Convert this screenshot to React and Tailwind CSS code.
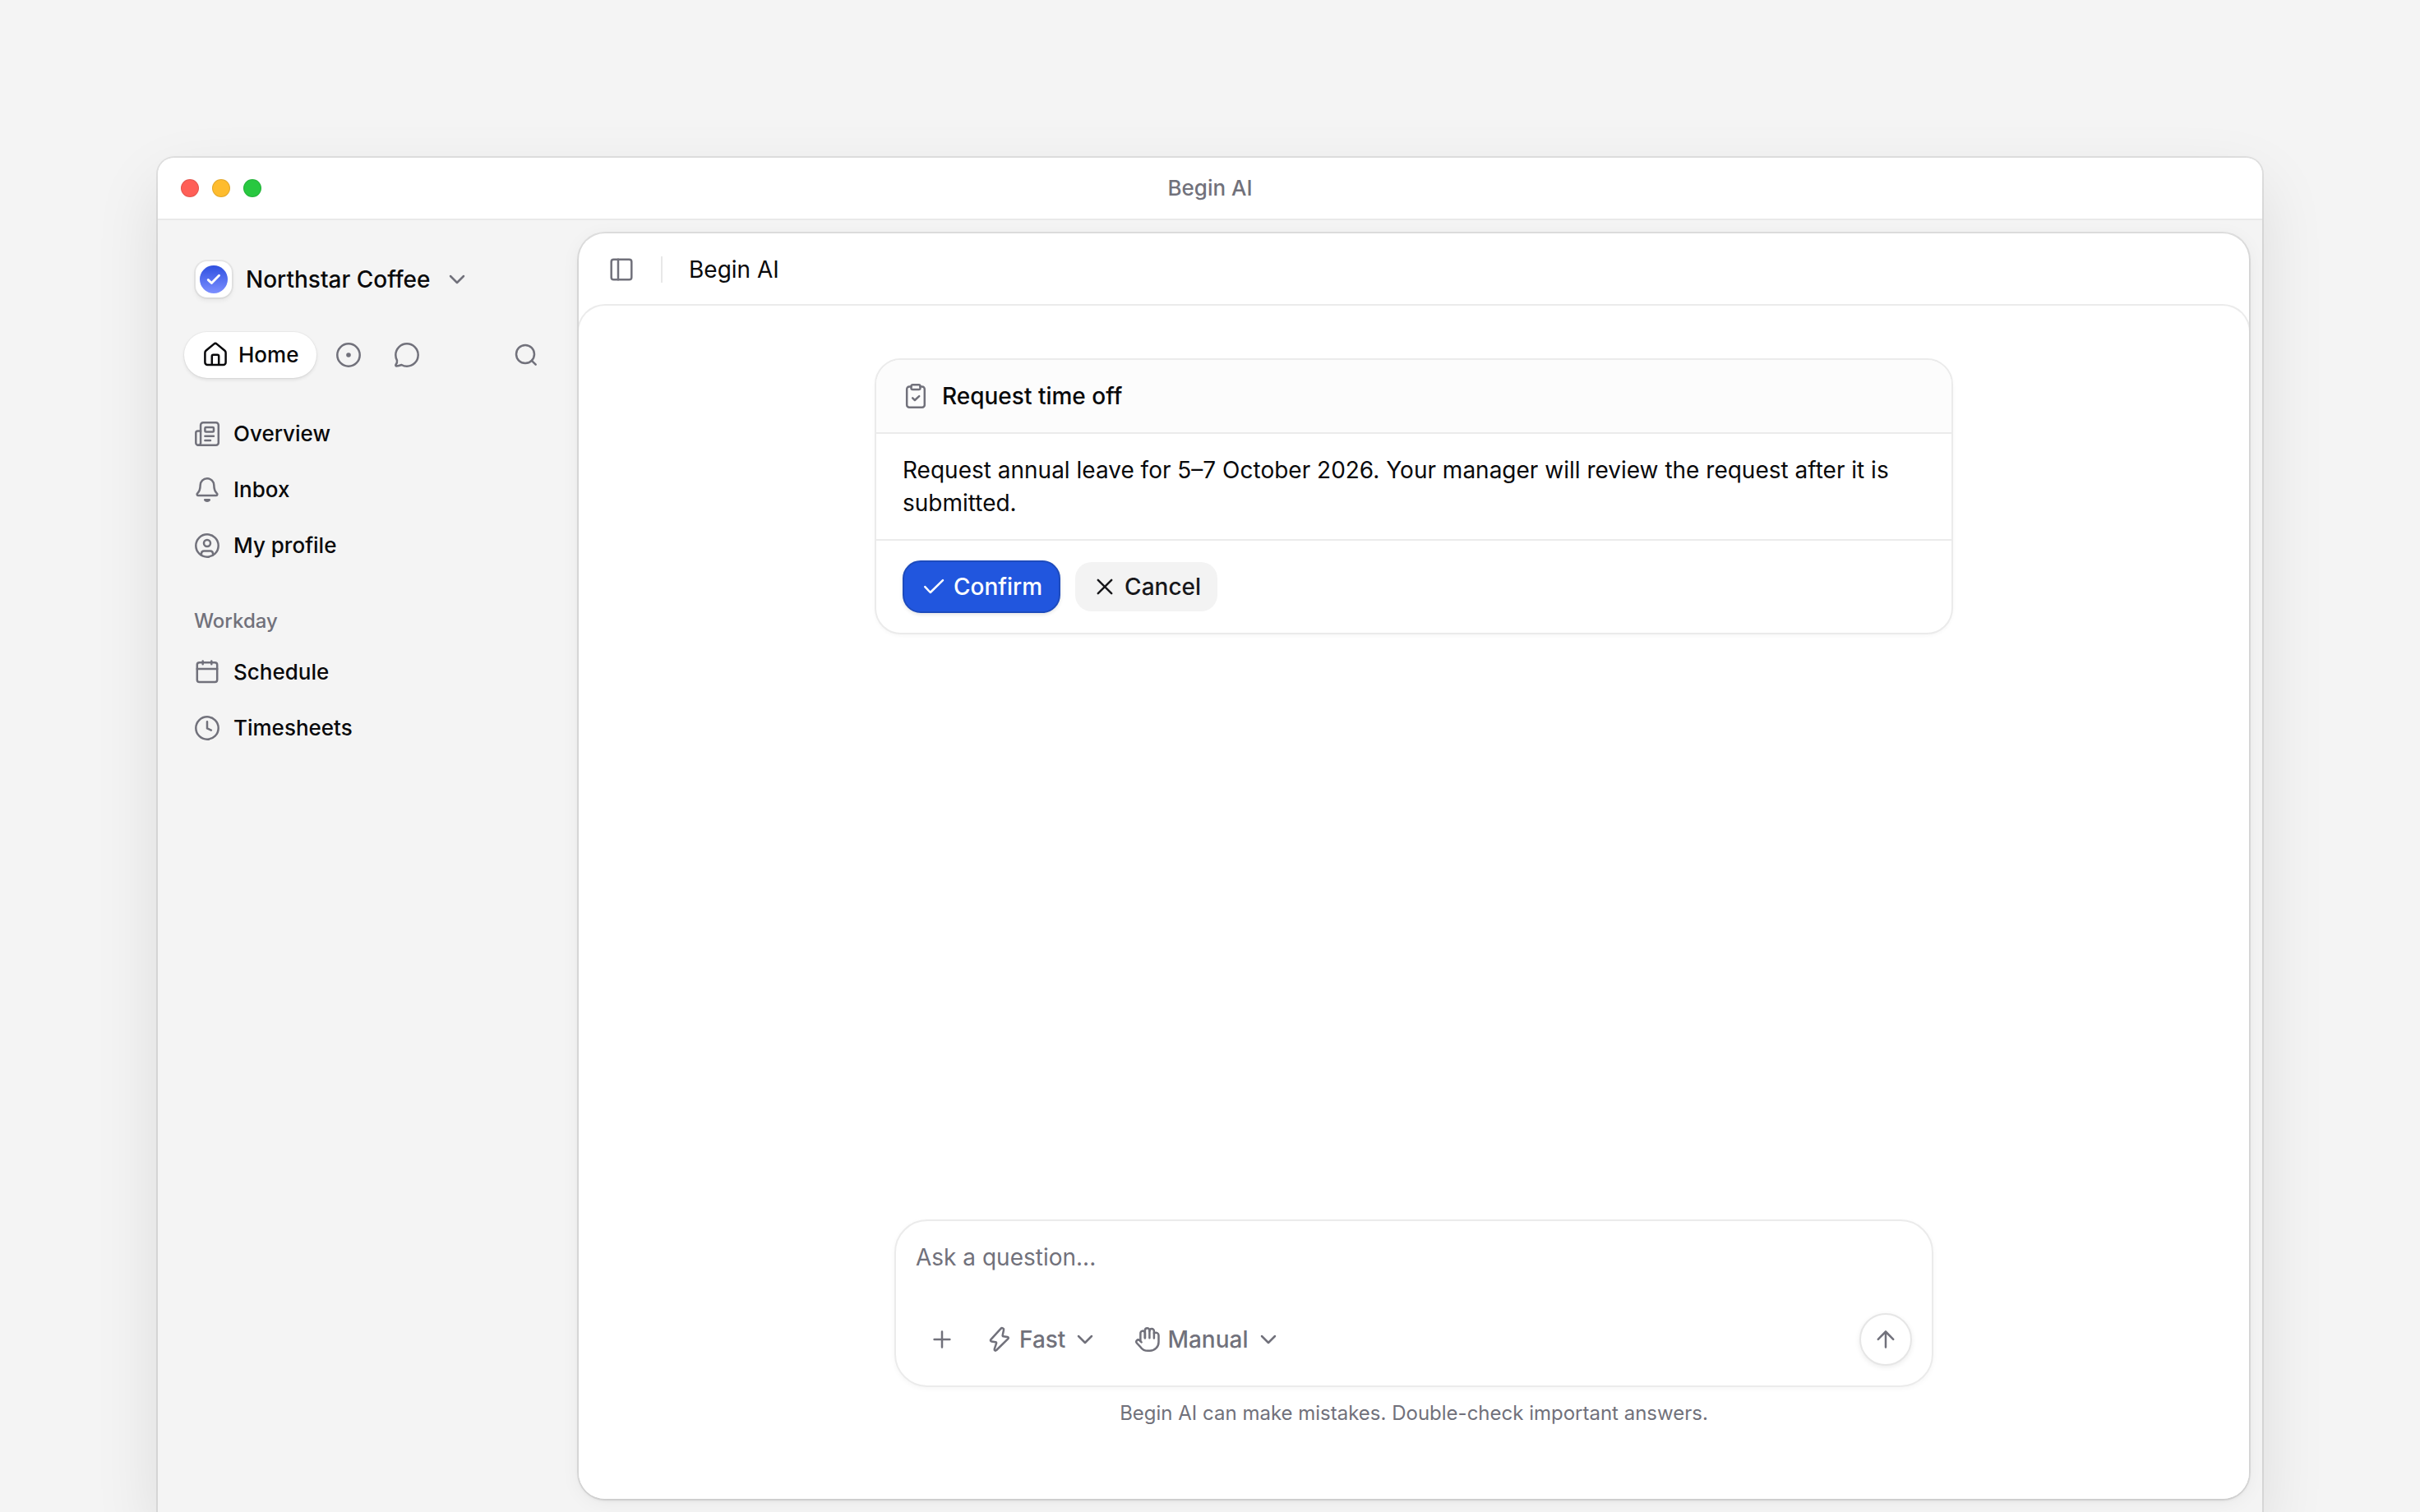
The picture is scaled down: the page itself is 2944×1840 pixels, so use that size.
import React from "react";

function Icon({ children, className = "" }) {
  return (
    <svg
      viewBox="0 0 32 32"
      className={`size-8 shrink-0 ${className}`}
      fill="none"
      stroke="currentColor"
      strokeWidth="2.5"
      strokeLinecap="round"
      strokeLinejoin="round"
      aria-hidden="true"
    >
      {children}
    </svg>
  );
}

const HomeIcon = () => (
  <Icon>
    <path d="M3.4 24.9V13.2c0-.9.4-1.8 1.1-2.4L14.3 2.6a2.6 2.6 0 0 1 3.4 0l9.8 8.2c.7.6 1.1 1.5 1.1 2.4v11.7a3 3 0 0 1-3 3H6.4a3 3 0 0 1-3-3z" />
    <path d="M11.8 27.7V17.6c0-1 .8-1.8 1.8-1.8h4.8c1 0 1.8.8 1.8 1.8v10.1" />
  </Icon>
);
const TargetIcon = () => (
  <Icon>
    <circle cx="16" cy="16" r="13.7" />
    <circle cx="16" cy="16" r="2.8" fill="currentColor" stroke="none" />
  </Icon>
);
const ChatIcon = () => (
  <Icon>
    <path d="M16 2.3C8.4 2.3 2.3 8.4 2.3 16c0 2.4.6 4.6 1.7 6.6.3 1.7-.3 3.6-1.5 5.2-.5.7 0 1.6.8 1.6 2.1-.1 4.1-.6 6.2-1.4 1.9 1.1 4.2 1.7 6.5 1.7 7.6 0 13.7-6.1 13.7-13.7S23.6 2.3 16 2.3z" />
  </Icon>
);
const SearchIcon = () => (
  <Icon>
    <circle cx="15" cy="15" r="11" />
    <path d="M22.8 22.8l4.9 4.9" />
  </Icon>
);
const NewsIcon = () => (
  <Icon>
    <path d="M5.2 29.8a2.9 2.9 0 0 1-2.9-2.9V14.7a2.3 2.3 0 0 1 2.3-2.3h3.5" />
    <path d="M5.2 29.8a2.9 2.9 0 0 0 2.9-2.9V5.2a3 3 0 0 1 3-3h15.7a3 3 0 0 1 3 3v21.6a3 3 0 0 1-3 3z" />
    <rect x="13.4" y="8.1" width="10.6" height="5.5" rx="1.2" />
    <path d="M13.4 18.7H24M13.4 24H20" />
  </Icon>
);
const BellIcon = () => (
  <Icon>
    <path d="M16 2.2c-4.7 0-8.2 3.6-8.3 8.2-.1 4.3-.7 7.3-3.3 9.7-1.3 1.2-.7 3 1 3h21.2c1.7 0 2.3-1.8 1-3-2.6-2.4-3.2-5.4-3.3-9.7-.1-4.6-3.6-8.200-8.300-8.200z" />
    <path d="M13.2 28.3a3.3 3.3 0 0 0 5.6 0z" fill="currentColor" />
  </Icon>
);
const ProfileIcon = () => (
  <Icon>
    <circle cx="16" cy="16" r="13.7" />
    <circle cx="16" cy="13" r="4" />
    <path d="M8.8 27.2l.3-2.2a3 3 0 0 1 3-2.6h7.8a3 3 0 0 1 3 2.6l.3 2.2" />
  </Icon>
);
const CalendarIcon = () => (
  <Icon>
    <rect x="3.8" y="4.2" width="24.4" height="23.8" rx="2.8" />
    <path d="M3.8 12h24.4M10.700 2.400v3.800M21.300 2.400v3.800" />
  </Icon>
);
const ClockIcon = () => (
  <Icon>
    <circle cx="16" cy="16" r="13.7" />
    <path d="M16 8.200v8.200l4.900 2.200" />
  </Icon>
);
const SidebarIcon = () => (
  <Icon>
    <rect x="3.7" y="3.7" width="24.6" height="24.6" rx="2.8" />
    <path d="M12 3.7v24.6" />
  </Icon>
);
const ClipboardIcon = () => (
  <Icon>
    <path d="M10.5 4.5H8.2a3 3 0 0 0-3 3v19.3a3 3 0 0 0 3 3h15.600a3 3 0 0 0 3-3V7.500a3 3 0 0 0-3-3h-2.300" />
    <rect x="10.500" y="2.200" width="11" height="5.800" rx="1.800" />
    <path d="M12.200 18.400l2.700 2.600 5.300-4.900" />
  </Icon>
);
const CheckIcon = () => (
  <Icon>
    <path d="M5.300 16.200l6.500 6.800L27 8.200" />
  </Icon>
);
const CloseIcon = () => (
  <Icon>
    <path d="M7.800 7.800l16.400 16.400M24.200 7.800L7.800 24.200" />
  </Icon>
);
const ChevronIcon = () => (
  <Icon>
    <path d="M8 12l8 8 8-8" />
  </Icon>
);
const PlusIcon = () => (
  <Icon>
    <path d="M16 6.600v18.800M6.600 16h18.800" />
  </Icon>
);
const ArrowUpIcon = () => (
  <Icon>
    <path d="M16 25.500V6.500M6.800 15.800L16 6.500l9.200 9.300" />
  </Icon>
);
const BoltIcon = () => (
  <Icon>
    <path d="M17.500 2.900L5.400 16.200c-.8.900-.4 2 .8 2.200l5 .8c.7.100 1.100.7.900 1.400l-2.300 7c-.5 1.700 1.200 2.700 2.400 1.400l14.200-13.800c.8-.9.400-2-.8-2.200l-5-.8c-.7-.1-1.100-.7-.9-1.400l1.400-6.500c.4-1.900-2.300-2.900-3.600-1.400z" />
  </Icon>
);
const HandIcon = () => (
  <Icon>
    <path d="M7.400 17.600V8.800a2.700 2.700 0 0 1 5.500-.8v6.200" />
    <path d="M12.900 14.200V5a2.750 2.750 0 0 1 5.500 0v9.200" />
    <path d="M18.400 5.800a2.750 2.750 0 0 1 5.500 0v8.600" />
    <path d="M23.900 8.200c3.400-1 5.600.2 5.600 2.800v8.200a10.600 10.600 0 0 1-10.600 10.600h-2.500a11 11 0 0 1-8.800-4.400L3 20.500c-2-2.300 1-5.500 3.300-3.400l2.300 2.300" />
  </Icon>
);

const mainLinks = [
  { label: "Overview", icon: NewsIcon },
  { label: "Inbox", icon: BellIcon },
  { label: "My profile", icon: ProfileIcon },
];
const workdayLinks = [
  { label: "Schedule", icon: CalendarIcon },
  { label: "Timesheets", icon: ClockIcon },
];

function NavList({ items, label }) {
  return (
    <ul className="flex flex-col gap-1" aria-label={label}>
      {items.map(({ label, icon: I }) => (
        <li key={label}>
          <a href="#" className="flex h-16 items-center gap-4 px-3 text-[26px] leading-[38px] font-medium">
            <span className="flex text-zinc-500">
              <I />
            </span>
            {label}
          </a>
        </li>
      ))}
    </ul>
  );
}

function Sidebar() {
  return (
    <aside className="w-[512px] shrink-0 px-8 pt-10">
      <button type="button" className="flex h-16 items-center gap-[17px] px-[14px] text-[28px] font-medium">
        <span className="flex size-11 items-center justify-center rounded-[14px] bg-white shadow-[0_0_0_2px_rgba(0,0,0,0.05),0_3px_6px_rgba(0,0,0,0.08)]">
          <svg viewBox="0 0 34 34" className="size-[34px]" aria-hidden="true">
            <defs>
              <linearGradient id="logoFill" x1="0" y1="0" x2="0" y2="1">
                <stop offset="0" stopColor="#2f50e0" />
                <stop offset="1" stopColor="#7c8fff" />
              </linearGradient>
            </defs>
            <circle cx="17" cy="17" r="17" fill="url(#logoFill)" />
            <path d="M10.300 17.600l4.100 3.900 9.100-9.200" fill="none" stroke="#fff" strokeWidth="2.900" strokeLinecap="round" strokeLinejoin="round" />
          </svg>
        </span>
        Northstar Coffee
        <span className="flex text-zinc-500">
          <ChevronIcon />
        </span>
      </button>

      <div className="mt-8 flex items-center gap-[7px] text-zinc-500">
        <button type="button" className="flex h-14 items-center gap-3 rounded-full bg-white px-[22px] text-[26px] leading-[38px] font-medium text-zinc-950 shadow-[0_0_0_1px_rgba(0,0,0,0.03),0_2px_4px_rgba(0,0,0,0.10)]">
          <HomeIcon />
          Home
        </button>
        <button type="button" aria-label="Tasks" className="flex h-14 w-16 items-center justify-center">
          <TargetIcon />
        </button>
        <button type="button" aria-label="Chat" className="flex h-14 w-16 items-center justify-center">
          <ChatIcon />
        </button>
        <button type="button" aria-label="Search" className="ml-auto flex h-14 w-16 items-center justify-center">
          <SearchIcon />
        </button>
      </div>

      <nav className="mt-9">
        <NavList items={mainLinks} label="Main" />
        <h2 className="mt-10 mb-[10px] px-3 text-[24px] leading-10 font-medium text-zinc-500">Workday</h2>
        <NavList items={workdayLinks} label="Workday" />
      </nav>
    </aside>
  );
}

function RequestCard() {
  return (
    <section className="mx-auto w-full max-w-[1312px] overflow-hidden rounded-[32px] border-2 border-[#ebebeb] bg-white shadow-[0_2px_4px_rgba(0,0,0,0.03)]">
      <header className="flex h-[90px] items-center gap-4 border-b-2 border-[#ebebeb] bg-[#fcfcfc] px-8">
        <span className="flex text-zinc-500">
          <ClipboardIcon />
        </span>
        <h2 className="text-[28px] font-medium">Request time off</h2>
      </header>
      <p className="border-b-2 border-[#ebebeb] px-8 py-6 text-[28px] leading-10">
        Request annual leave for 5–7 October 2026. Your manager will review the request after it is submitted.
      </p>
      <div className="flex gap-4 px-8 py-6">
        <button type="button" className="flex h-16 items-center gap-2 rounded-[22px] border-2 border-[#1d4bbd] bg-[#2156de] px-5 text-[28px] font-medium text-white shadow-[0_2px_4px_rgba(0,0,0,0.10)]">
          <CheckIcon />
          Confirm
        </button>
        <button type="button" className="flex h-16 items-center gap-2 rounded-[22px] border-2 border-transparent bg-[#f3f3f3] bg-clip-padding px-5 text-[28px] font-medium text-zinc-900">
          <CloseIcon />
          Cancel
        </button>
      </div>
    </section>
  );
}

function Composer() {
  return (
    <form className="mx-auto flex w-full max-w-[1264px] flex-col rounded-[40px] border-2 border-[#ebebeb] bg-white p-6 text-[28px] shadow-[0_2px_6px_rgba(0,0,0,0.04)]">
      <textarea
        aria-label="Ask a question"
        placeholder="Ask a question..."
        className="block h-[88px] w-full resize-none leading-10 outline-none placeholder:text-zinc-500"
      />
      <div className="flex items-center font-medium text-zinc-500">
        <button type="button" aria-label="Add attachment" className="flex size-16 items-center justify-center">
          <PlusIcon />
        </button>
        <button type="button" className="flex h-16 items-center gap-2 px-[22px]">
          <BoltIcon />
          Fast
          <ChevronIcon />
        </button>
        <button type="button" className="flex h-16 items-center gap-2 px-[22px]">
          <HandIcon />
          Manual
          <ChevronIcon />
        </button>
        <button type="button" aria-label="Send" className="ml-auto flex size-16 items-center justify-center rounded-full border-2 border-[#e6e6e6] bg-white shadow-[0_2px_6px_rgba(0,0,0,0.08)]">
          <ArrowUpIcon />
        </button>
      </div>
    </form>
  );
}

function Panel() {
  return (
    <main className="flex min-w-0 flex-1 flex-col overflow-hidden rounded-[32px] bg-white shadow-[0_0_0_2px_rgba(0,0,0,0.08),0_2px_4px_rgba(0,0,0,0.08),0_4px_24px_rgba(0,0,0,0.05)]">
      <header className="flex h-[88px] shrink-0 items-center px-9">
        <button type="button" aria-label="Toggle sidebar" className="flex text-zinc-500">
          <SidebarIcon />
        </button>
        <span className="mx-8 h-8 w-[2px] bg-[#e8e8e8]" />
        <h1 className="text-[28px]">Begin AI</h1>
      </header>
      <div className="flex flex-1 flex-col rounded-t-[32px] bg-white px-12 pt-16 shadow-[0_0_0_2px_#ebebeb]">
        <RequestCard />
        <div className="mt-auto pb-[88px]">
          <Composer />
          <p className="mt-4 text-center text-[24px] leading-8 text-zinc-500">
            Begin AI can make mistakes. Double-check important answers.
          </p>
        </div>
      </div>
    </main>
  );
}

export default function App() {
  return (
    <div className="flex h-screen flex-col overflow-hidden bg-[#f4f4f4] px-48 pt-48 font-['Inter',sans-serif] text-zinc-950">
      <div className="flex flex-1 flex-col rounded-t-[20px] bg-[#f4f4f4] shadow-[0_0_0_2px_rgba(0,0,0,0.08),0_32px_80px_rgba(0,0,0,0.10)]">
        <div className="grid h-[76px] shrink-0 grid-cols-[1fr_auto_1fr] items-center rounded-t-[20px] border-b-2 border-[#e9e9e9] bg-white px-7">
          <div className="flex gap-4">
            <span className="size-[22px] rounded-full border border-black/10 bg-[#ff5f57]" />
            <span className="size-[22px] rounded-full border border-black/10 bg-[#febc2e]" />
            <span className="size-[22px] rounded-full border border-black/10 bg-[#28c840]" />
          </div>
          <p className="text-[26px] leading-[38px] font-medium text-zinc-500">Begin AI</p>
        </div>
        <div className="flex flex-1">
          <Sidebar />
          <div className="flex min-w-0 flex-1 py-4 pr-4">
            <Panel />
          </div>
        </div>
      </div>
    </div>
  );
}
